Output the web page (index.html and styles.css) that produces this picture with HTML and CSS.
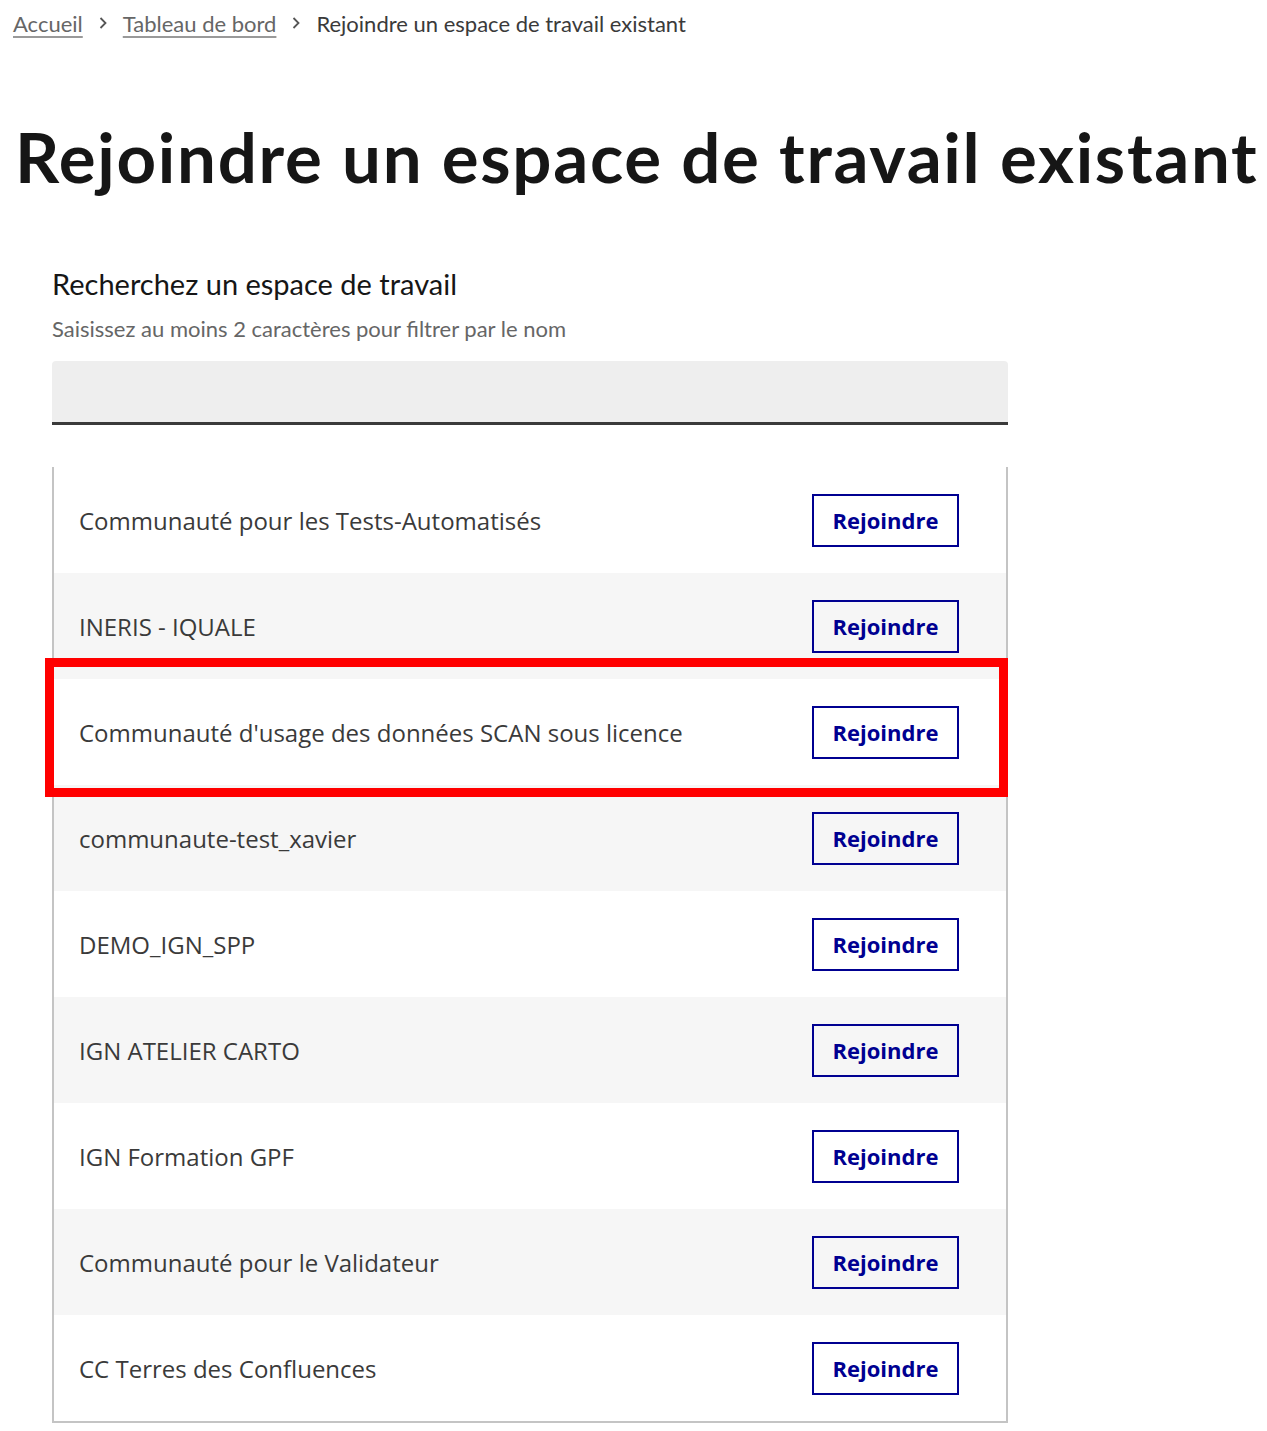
FILE: index.html
```html
<!DOCTYPE html>
<html lang="fr">
<head>
  <meta charset="UTF-8">
  <meta name="viewport" content="width=device-width, initial-scale=1.0">
  <title>Rejoindre un espace de travail existant</title>
  <link rel="stylesheet" href="styles.css">
</head>
<body>
  <nav class="breadcrumb">
    <a href="#" class="crumb-link">Accueil</a>
    <svg class="crumb-sep" width="10" height="14" viewBox="0 0 10 14"><path d="M2.5 2 L7.5 7 L2.5 12" fill="none" stroke="#555" stroke-width="1.8"/></svg>
    <a href="#" class="crumb-link">Tableau de bord</a>
    <svg class="crumb-sep" width="10" height="14" viewBox="0 0 10 14"><path d="M2.5 2 L7.5 7 L2.5 12" fill="none" stroke="#555" stroke-width="1.8"/></svg>
    <span class="crumb-current">Rejoindre un espace de travail existant</span>
  </nav>

  <h1 class="page-title">Rejoindre un espace de travail existant</h1>

  <div class="search">
    <label class="search-label" for="search-input">Recherchez un espace de travail</label>
    <div class="search-hint">Saisissez au moins 2 caractères pour filtrer par le nom</div>
    <input type="text" id="search-input" class="search-input">
  </div>

  <div class="list-wrap">
    <ul class="space-list">
      <li class="space-row"><span class="space-name">Communauté pour les Tests-Automatisés</span><button class="join-btn">Rejoindre</button></li>
      <li class="space-row"><span class="space-name">INERIS - IQUALE</span><button class="join-btn">Rejoindre</button></li>
      <li class="space-row"><span class="space-name">Communauté d'usage des données SCAN sous licence</span><button class="join-btn">Rejoindre</button></li>
      <li class="space-row"><span class="space-name">communaute-test_xavier</span><button class="join-btn">Rejoindre</button></li>
      <li class="space-row"><span class="space-name">DEMO_IGN_SPP</span><button class="join-btn">Rejoindre</button></li>
      <li class="space-row"><span class="space-name">IGN ATELIER CARTO</span><button class="join-btn">Rejoindre</button></li>
      <li class="space-row"><span class="space-name">IGN Formation GPF</span><button class="join-btn">Rejoindre</button></li>
      <li class="space-row"><span class="space-name">Communauté pour le Validateur</span><button class="join-btn">Rejoindre</button></li>
      <li class="space-row"><span class="space-name">CC Terres des Confluences</span><button class="join-btn">Rejoindre</button></li>
    </ul>
    <div class="highlight"></div>
  </div>
</body>
</html>
```

FILE: styles.css
```css
* {
  margin: 0;
  padding: 0;
  box-sizing: border-box;
}

body {
  width: 1267px;
  font-family: "Open Sans", "Noto Sans", sans-serif;
  background: #fff;
  color: #3a3a3a;
}

.breadcrumb {
  display: flex;
  align-items: center;
  gap: 15px;
  padding: 6px 0 0 13px;
  height: 40px;
  font-family: Lato, "Open Sans", sans-serif;
  font-size: 22px;
  color: #3a3a3a;
}

.crumb-link {
  color: #666;
  text-decoration: underline;
  text-decoration-color: #999;
  text-underline-offset: 4px;
}

.crumb-sep {
  display: block;
}

.crumb-current {
  color: #3a3a3a;
}

.page-title {
  margin: 77px 0 0 15px;
  font-family: Lato, "Open Sans", sans-serif;
  font-size: 69px;
  font-weight: 700;
  letter-spacing: 1.7px;
  line-height: 80px;
  color: #161616;
  white-space: nowrap;
}

.search {
  margin: 69px 0 0 52px;
  width: 956px;
}

.search-label {
  display: block;
  font-family: Lato, "Open Sans", sans-serif;
  font-size: 29px;
  line-height: 36px;
  color: #161616;
}

.search-hint {
  margin-top: 13px;
  font-family: Lato, "Open Sans", sans-serif;
  font-size: 22px;
  line-height: 28px;
  color: #666;
}

.search-input {
  display: block;
  margin-top: 18px;
  width: 956px;
  height: 64px;
  background: #eeeeee;
  border: none;
  border-bottom: 3px solid #3a3a3a;
  border-radius: 4px 4px 0 0;
  font-size: 22px;
  padding: 0 16px;
}

.list-wrap {
  position: relative;
  margin: 42px 0 0 52px;
  width: 956px;
}

.space-list {
  list-style: none;
  border-left: 2px solid #c4c4c4;
  border-right: 2px solid #c4c4c4;
  border-bottom: 2px solid #c4c4c4;
}

.space-row {
  display: flex;
  align-items: center;
  justify-content: space-between;
  height: 106px;
  padding: 0 47px 0 25px;
  background: #fff;
}

.space-row:nth-child(even) {
  background: #f6f6f6;
}

.space-name {
  font-size: 24px;
  color: #3a3a3a;
}

.join-btn {
  width: 147px;
  height: 53px;
  background: transparent;
  border: 2px solid #000091;
  font-family: "Open Sans", sans-serif;
  font-size: 22px;
  font-weight: 700;
  color: #000091;
  cursor: pointer;
}

.highlight {
  position: absolute;
  left: -7px;
  top: 191px;
  width: 963px;
  height: 139px;
  border: 9px solid #ff0000;
  pointer-events: none;
}
```
